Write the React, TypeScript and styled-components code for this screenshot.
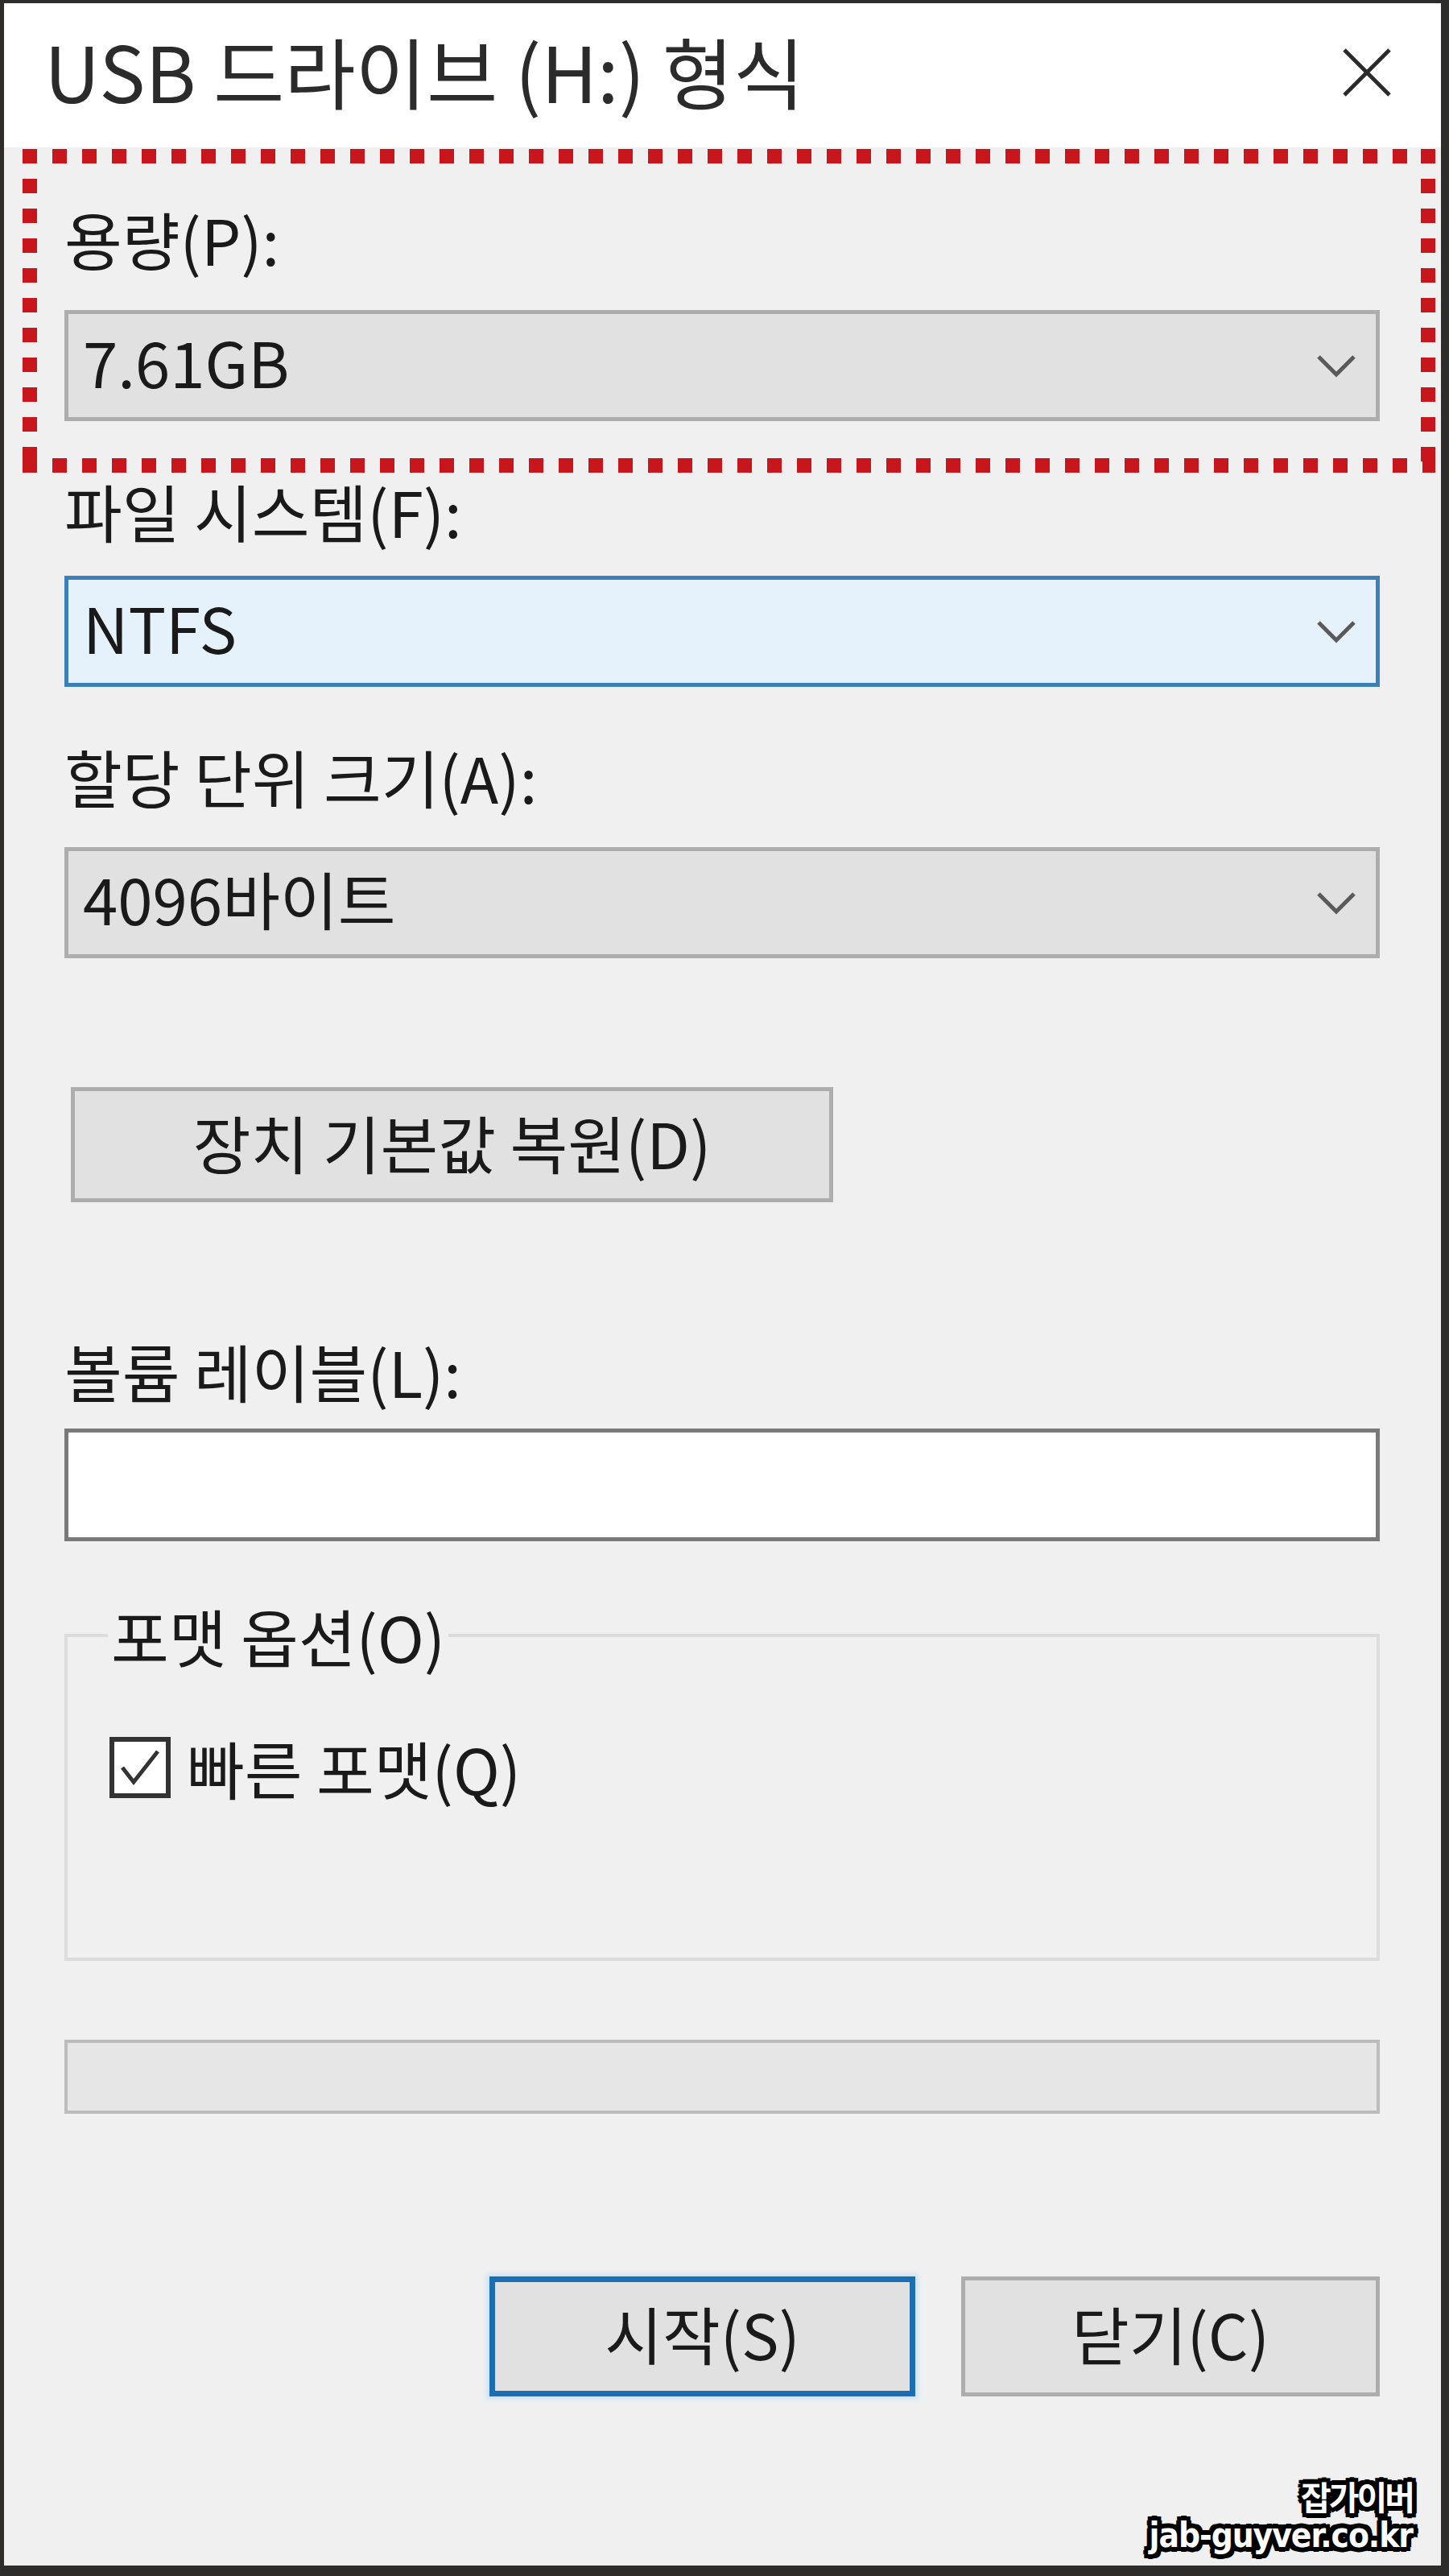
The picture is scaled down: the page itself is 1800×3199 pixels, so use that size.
import React from "react";
import styled, { createGlobalStyle } from "styled-components";

const GlobalStyle = createGlobalStyle`
  html, body { margin: 0; padding: 0; }
  body {
    background: #2f2c2c;
    font-family: "Noto Sans CJK KR", "Noto Sans", sans-serif;
  }
  * { box-sizing: border-box; }
`;

const Window = styled.div`
  position: relative;
  margin: 4px 10px 0 5px;
  height: 3182px;
  background: #f0f0f0;
  display: flex;
  flex-direction: column;
  color: #1a1a1a;
`;

const TitleBar = styled.div`
  height: 179px;
  background: #ffffff;
  display: flex;
  justify-content: space-between;
  align-items: flex-start;
  padding: 28px 62px 0 50px;
`;

const Title = styled.div`
  font-size: 96px;
  line-height: 110px;
  color: #2b2b2b;
  white-space: nowrap;
`;

const CloseIcon = styled.svg`
  width: 60px;
  height: 60px;
  margin-top: 28px;
  flex: none;
`;

const Body = styled.div`
  display: flex;
  flex-direction: column;
  padding: 0 76px 0 75px;
`;

const dotH = "repeating-linear-gradient(to right, #c8161d 0 18px, transparent 18px 37px)";
const dotV = "repeating-linear-gradient(to bottom, #c8161d 0 18px, transparent 18px 37px)";

const Highlight = styled.div`
  margin: 2px -69px 0 -52px;
  padding: 66px 69px 64px 52px;
  background:
    ${dotH} left top / 100% 18px no-repeat,
    ${dotH} left bottom / 100% 18px no-repeat,
    ${dotV} left top / 18px 100% no-repeat,
    ${dotV} right top / 18px 100% no-repeat;
`;

const Field = styled.div<{ $top: number; $gap: number }>`
  display: flex;
  flex-direction: column;
  gap: ${(p) => p.$gap}px;
  margin-top: ${(p) => p.$top}px;
`;

const Label = styled.div`
  font-size: 78px;
  line-height: 90px;
  white-space: nowrap;
`;

const Select = styled.div<{ $focused?: boolean }>`
  height: 138px;
  display: flex;
  align-items: center;
  justify-content: space-between;
  padding: 0 23px 0 18px;
  border: 5px solid ${(p) => (p.$focused ? "#3f7fb8" : "#adadad")};
  background: ${(p) => (p.$focused ? "#e5f1fb" : "#e1e1e1")};
  font-size: 78px;
  line-height: 90px;
`;

const ValueText = styled.span`
  padding-bottom: 12px;
  white-space: nowrap;
`;

const Chevron = styled.svg`
  width: 52px;
  height: 30px;
  flex: none;
`;

const ResetButton = styled.div`
  align-self: flex-start;
  margin: 160px 0 0 8px;
  width: 947px;
  height: 143px;
  border: 5px solid #adadad;
  background: #e1e1e1;
  display: flex;
  align-items: center;
  justify-content: center;
  padding-bottom: 8px;
  font-size: 78px;
  line-height: 90px;
  white-space: nowrap;
`;

const TextBox = styled.input`
  height: 140px;
  width: 100%;
  border: 5px solid #7a7a7a;
  background: #ffffff;
  font-size: 78px;
  font-family: inherit;
  padding: 0 18px;
  outline: none;
`;

const GroupBox = styled.fieldset`
  margin: 72px 0 0;
  padding: 74px 0 191px 50px;
  border: 4px solid #dcdcdc;
  min-width: 0;
`;

const Legend = styled.legend`
  padding: 0 4px;
  font-size: 78px;
  line-height: 90px;
  white-space: nowrap;
`;

const CheckRow = styled.label`
  display: flex;
  align-items: center;
  gap: 20px;
  height: 90px;
  font-size: 78px;
  line-height: 90px;
  white-space: nowrap;
`;

const CheckBox = styled.span`
  width: 76px;
  height: 76px;
  margin-left: 2px;
  border: 6px solid #333333;
  background: #ffffff;
  display: flex;
  align-items: center;
  justify-content: center;
  flex: none;
`;

const Progress = styled.div`
  margin-top: 98px;
  height: 92px;
  border: 4px solid #bcbcbc;
  background: #e6e6e6;
`;

const ButtonRow = styled.div`
  margin-top: 202px;
  display: flex;
  justify-content: flex-end;
  gap: 57px;
`;

const DialogButton = styled.div<{ $primary?: boolean; $w: number }>`
  width: ${(p) => p.$w}px;
  height: 149px;
  display: flex;
  align-items: center;
  justify-content: center;
  padding-bottom: 10px;
  font-size: 78px;
  line-height: 90px;
  white-space: nowrap;
  background: #e1e1e1;
  border: ${(p) => (p.$primary ? "7px solid #1d6db3" : "5px solid #adadad")};
  box-shadow: ${(p) => (p.$primary ? "0 0 6px 3px rgba(170, 215, 250, 0.6)" : "none")};
`;

const Watermark = styled.div`
  position: absolute;
  right: 35px;
  bottom: 14px;
  display: flex;
  flex-direction: column;
  align-items: flex-end;
  gap: 4px;
  color: #ffffff;
  font-weight: 700;
  line-height: 1.1;
  text-shadow:
    4px 0 0 #000, -4px 0 0 #000, 0 4px 0 #000, 0 -4px 0 #000,
    3px 3px 0 #000, -3px 3px 0 #000, 3px -3px 0 #000, -3px -3px 0 #000,
    6px 0 0 #000, -6px 0 0 #000, 0 6px 0 #000, 0 -6px 0 #000,
    5px 5px 0 #000, -5px 5px 0 #000, 5px -5px 0 #000, -5px -5px 0 #000;
`;

const WatermarkKo = styled.span`
  font-family: "Noto Sans CJK KR", sans-serif;
  font-size: 41px;
  letter-spacing: -3px;
`;

const WatermarkUrl = styled.span`
  font-family: "DejaVu Sans", "Liberation Sans", sans-serif;
  font-stretch: condensed;
  font-size: 42px;
  letter-spacing: -1px;
`;

const ChevronIcon = () => (
  <Chevron viewBox="0 0 52 30">
    <polyline points="4,4 26,26 48,4" fill="none" stroke="#5a5a5a" strokeWidth="5" />
  </Chevron>
);

type SelectFieldProps = {
  label: string;
  value: string;
  top: number;
  gap: number;
  focused?: boolean;
};

const SelectField = ({ label, value, top, gap, focused }: SelectFieldProps) => (
  <Field $top={top} $gap={gap}>
    <Label>{label}</Label>
    <Select $focused={focused}>
      <ValueText>{value}</ValueText>
      <ChevronIcon />
    </Select>
  </Field>
);

export default function App() {
  return (
    <>
      <GlobalStyle />
      <Window>
        <TitleBar>
          <Title>USB 드라이브 (H:) 형식</Title>
          <CloseIcon viewBox="0 0 60 60">
            <line x1="2" y1="2" x2="58" y2="58" stroke="#2b2b2b" strokeWidth="5" />
            <line x1="58" y1="2" x2="2" y2="58" stroke="#2b2b2b" strokeWidth="5" />
          </CloseIcon>
        </TitleBar>
        <Body>
          <Highlight>
            <SelectField label="용량(P):" value="7.61GB" top={0} gap={44} />
          </Highlight>
          <SelectField label="파일 시스템(F):" value="NTFS" top={2} gap={36} focused />
          <SelectField label="할당 단위 크기(A):" value="4096바이트" top={66} gap={43} />
          <ResetButton>장치 기본값 복원(D)</ResetButton>
          <Field $top={164} $gap={27}>
            <Label>볼륨 레이블(L):</Label>
            <TextBox readOnly value="" />
          </Field>
          <GroupBox>
            <Legend>포맷 옵션(O)</Legend>
            <CheckRow>
              <CheckBox>
                <svg width="56" height="56" viewBox="0 0 56 56">
                  <polyline points="6,28 20,46 50,8" fill="none" stroke="#333" strokeWidth="5" />
                </svg>
              </CheckBox>
              빠른 포맷(Q)
            </CheckRow>
          </GroupBox>
          <Progress />
          <ButtonRow>
            <DialogButton $primary $w={529}>시작(S)</DialogButton>
            <DialogButton $w={520}>닫기(C)</DialogButton>
          </ButtonRow>
        </Body>
        <Watermark>
          <WatermarkKo>잡가이버</WatermarkKo>
          <WatermarkUrl>jab-guyver.co.kr</WatermarkUrl>
        </Watermark>
      </Window>
    </>
  );
}
